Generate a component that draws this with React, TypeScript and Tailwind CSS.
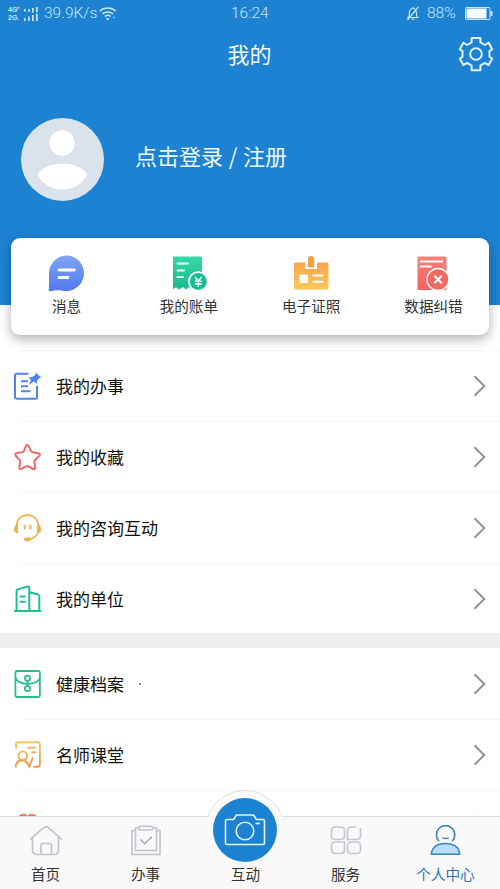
import type { ReactNode } from "react";

const StatusBar = () => (
  <div className="flex h-[27px] items-center pl-2 pr-[7px] text-[#c5e6fb]">
    <div className="flex w-[15px] flex-col whitespace-nowrap font-['Liberation_Sans'] text-[7px] font-bold leading-[8px]">
      <span>4G⁺</span>
      <span>2G.</span>
    </div>
    <svg width="15" height="14" viewBox="0 0 15 14" fill="currentColor">
      <path d="M1 2h1.6v2.5H1zM5.2 2h1.6v3H5.2zM9 1h1.7v4.5H9zM13 0h1.7v5.5H13zM1 11h1.6v3H1zM5.2 9.5h1.6V14H5.2zM9 8h1.7v6H9zM13 7h1.7v7H13z" />
    </svg>
    <span className="ml-[6px] w-[55px] whitespace-nowrap font-['Roboto'] text-[15.5px] font-light">39.9K/s</span>
    <svg width="18" height="15" viewBox="0 0 18 15" fill="none" stroke="currentColor" strokeWidth="1.4">
      <path d="M.7 5.2a11.8 11.8 0 0 1 16 0M3.3 8a8.2 8.2 0 0 1 10.8 0M5.8 10.6a4.4 4.4 0 0 1 5.8 0" />
      <circle cx="8.7" cy="13" r="1.2" fill="currentColor" stroke="none" />
      <circle cx="15" cy="11.5" r="1" fill="currentColor" stroke="none" opacity=".6" />
    </svg>
    <span className="ml-[114px] font-['Roboto'] text-[15.5px] font-light">16:24</span>
    <svg width="14" height="15" viewBox="0 0 14 15" className="ml-auto" fill="none" stroke="currentColor" strokeWidth="1.2">
      <path d="M1 11.5h11.7M2.6 11.3c.8-1.4.7-3 .8-4.6.1-2.6 1.5-4.2 3.5-4.2s3.4 1.6 3.5 4.2c.1 1.6 0 3.2.9 4.6M6.9 2.5V1M5.7 13.2h2.5M12.3.8 1.5 14" />
    </svg>
    <span className="ml-[7px] w-[31px] font-['Roboto'] text-[15.5px] font-light">88%</span>
    <svg width="28" height="13" viewBox="0 0 28 13" className="ml-[7px]">
      <rect x=".5" y=".5" width="24.5" height="12" rx="1" fill="none" stroke="#c5e6fb" />
      <rect x="1.5" y="1.5" width="20" height="10" fill="#f0fbff" />
      <path d="M25.5 4h2v5h-2z" fill="#c5e6fb" />
    </svg>
  </div>
);

const GearIcon = () => (
  <svg width="36" height="36" viewBox="0 0 36 36" fill="none" stroke="#e0f6ff" strokeWidth="2" strokeLinejoin="round">
    <path d="M13.6 1.9h8.8v4.5l4.4 2.6 3.9-2.3 3.5 6.7-2.7 1.8v5.6l2.7 1.8-3.5 6.4-3.9-2.1-4.4 2.6v4.7h-8.8v-4.7L9.2 26.9 5.3 29l-3.5-6.4 2.7-1.8v-5.6l-2.7-1.8 3.5-6.7L9.2 9l4.4-2.6z" />
    <circle cx="18" cy="18" r="5.8" />
  </svg>
);

const Avatar = () => (
  <svg width="84" height="84" viewBox="0 0 84 84">
    <circle cx="42.5" cy="41.5" r="41.5" fill="#dae2ec" />
    <circle cx="42.2" cy="25" r="12.7" fill="#fff" />
    <path d="M17.5 56.5C22.5 49 32.5 45.5 42.3 45.5S62.5 49 67.5 56.5C62 67 52.5 71.5 42.5 71.5s-20-4.5-25-15z" fill="#fff" />
  </svg>
);

const MessageIcon = () => (
  <svg width="38" height="38" viewBox="0 0 38 38">
    <defs>
      <linearGradient id="message" x2="0" y2="1">
        <stop stopColor="#7fa5f8" />
        <stop offset="1" stopColor="#5379ee" />
      </linearGradient>
    </defs>
    <path d="M19 1.5a17.8 17.8 0 1 1-4.5 35.2C10 35.8 5.5 37 1.8 37.2c-.9 0-1.2-.5-1.1-1.3.5-5 .3-11 .3-16.4a18 18 0 0 1 18-18z" fill="url(#message)" />
    <path d="M11 16h15.5M11 23.5h9" stroke="#fff" strokeWidth="2.8" strokeLinecap="round" />
  </svg>
);

const BillIcon = () => (
  <svg width="38" height="38" viewBox="0 0 38 38">
    <defs>
      <linearGradient id="bill" x2="0" y2="1">
        <stop stopColor="#35d9a4" />
        <stop offset="1" stopColor="#18b98f" />
      </linearGradient>
    </defs>
    <path d="M3.5 2.5H31q1 0 1 1v30l-2.5 2-3.5-2.3-3.5 2.3L19 33l-3 2.5-3.3-2.5-3.5 2.5-3.2-2.3L3 35V3.5q0-1 .5-1z" fill="url(#bill)" />
    <path d="M7.5 9.5H18M7.5 16.5H14M7.5 23.2H13" stroke="#fff" strokeWidth="1.8" strokeLinecap="round" />
    <circle cx="28.3" cy="27.5" r="10.3" fill="#fff" />
    <circle cx="28.3" cy="27.5" r="8.5" fill="#1abc93" />
    <path d="m25 23 3.3 4 3.3-4M24.8 27.3h7M24.8 30h7M28.3 27v5.5" fill="none" stroke="#fff" strokeWidth="1.4" />
  </svg>
);

const LicenceIcon = () => (
  <svg width="38" height="38" viewBox="0 0 38 38">
    <defs>
      <linearGradient id="licence" x2="0" y2="1">
        <stop stopColor="#f6a54f" />
        <stop offset="1" stopColor="#fac95b" />
      </linearGradient>
    </defs>
    <path d="M3 8.5h10V15h12V8.5h10q1.5 0 1.5 1.5v24q0 1.5-1.5 1.5H3.5Q2 35.5 2 34V10q0-1.500 1-1.500z" fill="url(#licence)" />
    <path d="M16 5.200a3.100 3.100 0 0 1 6.200 0v8.300H16z" fill="#f5a04d" />
    <path d="M7.500 20.500h8.500V29H7.500z" fill="#fff" />
    <path d="M20.500 21.500h11M20.500 27.800h11" stroke="#fff" strokeWidth="2" />
  </svg>
);

const ErrorDataIcon = () => (
  <svg width="38" height="38" viewBox="0 0 38 38">
    <defs>
      <linearGradient id="errorData" x2="0" y2="1">
        <stop stopColor="#fc8178" />
        <stop offset="1" stopColor="#f16160" />
      </linearGradient>
    </defs>
    <rect x="3.5" y="2.5" width="29" height="33.5" rx="1.2" fill="url(#errorData)" />
    <path d="M6 7.5h23M6 12.5h11.5" stroke="#fff" strokeWidth="2" />
    <circle cx="24" cy="25.5" r="11" fill="#f36863" stroke="#fff" strokeWidth="1.3" />
    <path d="m20.2 21.7 7.6 7.6m0-7.6-7.6 7.6" stroke="#fff" strokeWidth="2" />
  </svg>
);

const TaskIcon = () => (
  <svg width="30" height="30" viewBox="0 0 30 30" fill="none" stroke="#5183eb" strokeWidth="2">
    <path d="M15.5 2.7H4q-2 0-2 2V26q0 1.8 2 1.8h18.5q1.5 0 1.5-1.5V15" />
    <path d="M8 10.3h7M8 15.2h7M8 20.2h9.5" />
    <path d="m22.5 1.5 5.8 5-2.3.8-2 2.4-.2 3.3-3-2.4-5 3.5 2.3-5.2-2.5-2.4 3.5-.6 3.3-2z" fill="#5183eb" stroke="none" />
  </svg>
);

const StarIcon = () => (
  <svg width="30" height="30" viewBox="0 0 30 30" fill="none" stroke="#ef6b66" strokeWidth="2" strokeLinejoin="round">
    <path d="M12.9 4q1.5-2.1 2.8.1l2.5 5.1q.5.9 1.5 1l5.7 1q2.5.7.9 2.7l-4.5 4.3q-.6.8-.4 1.7l.9 5.4q.1 2.4-2.1 1.7l-5-2.7q-1-.5-1.9 0l-5 2.6q-2.1.6-2-1.7l1-5.4q.2-1-.5-1.7L2.7 13.7q-1.3-2 .9-2.6l5.8-.9q1-.1 1.4-1z" />
  </svg>
);

const HeadsetIcon = () => (
  <svg width="30" height="30" viewBox="0 0 30 30" fill="none" stroke="#efb252" strokeWidth="1.8">
    <path d="M3.5 14C3.5 6.5 8 2.2 14.5 2.2S25.5 6.5 25.5 14M25.3 19c-1.3 4-4 6.2-8.5 7" />
    <path d="M5 12v8.5C2 20.5 1 18.5 1 16.3S2 12 5 12zM24 12v8.5c2.9 0 4.3-2 4.3-4.2S26.900 12 24 12z" fill="#efb252" stroke="none" />
    <path d="M11.7 11.8v4.4M17.3 11.8v4.4" strokeWidth="2" />
    <ellipse cx="14.5" cy="26.2" rx="3.5" ry="2" fill="#efb252" stroke="none" />
  </svg>
);

const BuildingIcon = () => (
  <svg width="30" height="30" viewBox="0 0 30 30" fill="none" stroke="#24bd92" strokeWidth="2" strokeLinejoin="round">
    <path d="M1 26.9h27M3.6 26.5V6.8q0-1 1-1.4L14.5 2.5q1.8-.4 1.8 1.4v22.6M16.3 8.3l8.2 2q1.8.5 1.8 2.2v14" />
    <path d="M7.5 12.5h4.3M7.5 17.7h4.3" strokeLinecap="round" />
  </svg>
);

const ArchiveIcon = () => (
  <svg width="30" height="30" viewBox="0 0 30 30" fill="none" stroke="#2abd91" strokeWidth="1.8">
    <rect x="2.4" y="2" width="24.5" height="26" rx="1.5" />
    <path d="M2.5 9c2 4 6 5.3 9.5 5.6h5.5C22 14.3 25.5 12.5 26.9 9" />
    <circle cx="14.5" cy="9.2" r="2.6" />
    <circle cx="14.5" cy="19.5" r="2.6" />
    <path d="M14.5 12v5" />
  </svg>
);

const LessonIcon = () => (
  <svg width="30" height="30" viewBox="0 0 30 30" fill="none" stroke="url(#lesson)" strokeWidth="1.9">
    <defs>
      <linearGradient id="lesson" gradientUnits="userSpaceOnUse" x1="0" y1="0" x2="0" y2="28">
        <stop stopColor="#f2cc63" />
        <stop offset="1" stopColor="#ee9448" />
      </linearGradient>
    </defs>
    <path d="M3 8.5V4q0-1.7 1.7-1.7h20.5q1.7 0 1.7 1.7v20q0 2.8-2.8 2.8H20.5" />
    <path d="M14.5 7.8H23M18.5 12.3H23" />
    <circle cx="9.7" cy="15.7" r="4.3" />
    <path d="M2.5 27.5c.2-4 2.5-7 7-7.3 3.5.2 4.7 2.5 6.8 6.3l3.7-9.5" />
  </svg>
);

const HeartIcon = () => (
  <svg width="30" height="30" viewBox="0 0 30 30" fill="none" stroke="#ee6f59" strokeWidth="2">
    <path d="M14.5 26C8 20 5 15 5 10c0-6.5 6.5-8 9.5-3.5C17.5 2 24 3.5 24 10c0 5-3 10-9.5 16z" />
  </svg>
);

const Row = ({ icon, label, dot }: { icon: ReactNode; label: string; dot?: boolean }) => (
  <div className="flex h-[71px] shrink-0 items-center pl-[13px] pr-[14px]">
    {icon}
    <span className="ml-[13px] text-[17px] text-[#111]">{label}</span>
    {dot && <span className="ml-[15px] mt-px size-[2px] rounded-full bg-[#666]" />}
    <svg width="13" height="22" viewBox="0 0 13 22" className="ml-auto" fill="none" stroke="#929292" strokeWidth="2">
      <path d="m1.5 1.2 9.8 9.8-9.8 9.8" />
    </svg>
  </div>
);

const Divider = () => <div className="-mb-px ml-5 h-px shrink-0 bg-[#f5f5f5]" />;

const HomeIcon = () => (
  <svg width="34" height="32" viewBox="0 0 34 32" fill="none" stroke="#bfc0d0" strokeWidth="1.6" strokeLinejoin="round">
    <path d="M1 14.5 14.8 2.6q2.2-1.9 4.4 0L33 14.5M3.5 12.5v12.5q0 4.5 4.5 4.5h17q4.5 0 4.5-4.5v-12.5M12 29.5V20.5q0-2 2-2h6.5q2 0 2 2v9" />
  </svg>
);

const ClipboardIcon = () => (
  <svg width="34" height="32" viewBox="0 0 34 32" fill="none" stroke="#bfc0d0" strokeWidth="1.6">
    <path d="M6 5.5H3V29.5h28V5.5h-3M10 3H6.5v22.5h21V3H23.5" />
    <rect x="10" y="1.3" width="13.5" height="3.7" rx="1" />
    <path d="m11.5 14.5 4.3 4.2 7-7" stroke="#a7a9bb" />
  </svg>
);

const ServiceIcon = () => (
  <svg width="34" height="32" viewBox="0 0 34 32" fill="none" stroke="#c6c5d8" strokeWidth="1.7">
    <rect x="2.5" y="2" width="13" height="12.5" rx="3.5" />
    <path d="M27 2h-4.5Q18.5 2 18.5 6v8.5h9q4 0 4-4V3" />
    <path d="M6.5 17h9v7.5q0 4-4 4h-5q-4 0-4-4v-3.5q0-4 4-4z" />
    <rect x="18.5" y="17" width="13" height="11.5" rx="3.5" />
  </svg>
);

const PersonIcon = () => (
  <svg width="34" height="32" viewBox="0 0 34 32" fill="none" stroke="#3a82c0" strokeWidth="1.6">
    <path d="M10 16.2a9.2 9.2 0 1 1 13.2 0" />
    <path d="M13.4 12.7q3.2 1.8 6.4 0" strokeWidth="1.3" />
    <path d="M2.500 29.200v-2c1.500-6 7-8.700 14-8.700s12.500 2.700 14 8.700v2z" fill="#b9defb" />
  </svg>
);

const CameraIcon = () => (
  <svg width="42" height="32" viewBox="0 0 42 32" fill="none" stroke="#def3ff" strokeWidth="1.6" strokeLinejoin="round">
    <path d="M3 5.5h6.5L12.5 1h17l3 4.5H39q1.5 0 1.5 1.5v22q0 1.5-1.5 1.5H3q-1.5 0-1.5-1.5V7q0-1.5 1.5-1.5z" />
    <circle cx="21" cy="17" r="8.8" />
    <path d="M31.5 9.5h4.5" />
  </svg>
);

const shortcuts = [
  { label: "消息", icon: <MessageIcon /> },
  { label: "我的账单", icon: <BillIcon /> },
  { label: "电子证照", icon: <LicenceIcon /> },
  { label: "数据纠错", icon: <ErrorDataIcon /> },
];

const tabs = [
  { label: "首页", icon: <HomeIcon /> },
  { label: "办事", icon: <ClipboardIcon /> },
  { label: "互动", icon: null },
  { label: "服务", icon: <ServiceIcon /> },
  { label: "个人中心", icon: <PersonIcon />, active: true },
];

const BottomNav = () => (
  <nav className="relative h-[73px] shrink-0 border-t border-[#dedede] bg-[#f9f9f9]">
    {/* Raised camera button */}
    <div className="absolute -top-[27px] left-[205px] h-[26px] w-20 overflow-hidden">
      <div className="size-20 rounded-full border border-[#dfdfe3] bg-[#fbfbfb]" />
    </div>
    <div className="absolute -top-px left-[208px] h-px w-[74px] bg-[#f9f9f9]" />
    <div className="absolute -top-[19px] left-[213px] flex size-16 items-center justify-center rounded-full bg-[#1e82d2]">
      <CameraIcon />
    </div>
    <div className="-ml-[4.5px] grid w-[500px] grid-cols-5">
      {tabs.map((tab) => (
        <div key={tab.label} className="flex flex-col items-center pt-2">
          <div className="h-8">{tab.icon}</div>
          <span
            className={
              tab.active
                ? "mt-[7px] text-[14.6px] leading-5 text-[#2878b5]"
                : "mt-[7px] text-[14.6px] leading-5 text-[#333]"
            }
          >
            {tab.label}
          </span>
        </div>
      ))}
    </div>
  </nav>
);

const App = () => {
  return (
    <div className="flex h-[889px] w-[500px] flex-col overflow-hidden bg-white font-['Noto_Sans_CJK_SC',sans-serif]">
      <header className="h-[305px] shrink-0 bg-[#1e82d2]">
        <StatusBar />
        <div className="grid h-[54px] grid-cols-[1fr_auto_1fr] items-center pr-[6px]">
          <span />
          <h1 className="-mt-0.5 pl-[5px] text-[22px] text-[#eefaff]">我的</h1>
          <div className="flex justify-end">
            <GearIcon />
          </div>
        </div>
        <div className="mt-[37px] flex h-[84px] items-center pl-[20px]">
          <Avatar />
          <span className="-mt-2.5 ml-[31px] text-[22px] text-[#eefaff] [word-spacing:0.8px]">点击登录 / 注册</span>
        </div>
      </header>

      {/* Shortcuts card overlaps the header */}
      <div className="z-10 mx-[11px] -mt-[67px] flex h-[97px] shrink-0 justify-between rounded-[9px] bg-white px-[25px] pt-4 shadow-[0_4px_12px_rgba(0,0,0,0.32)]">
        {shortcuts.map((item) => (
          <div key={item.label} className="flex w-[61px] flex-col items-center">
            {item.icon}
            <span className="mt-1 whitespace-nowrap text-[14.6px] leading-5 text-[#333]">{item.label}</span>
          </div>
        ))}
      </div>

      <main className="flex min-h-0 flex-1 flex-col overflow-hidden pt-[15px]">
        <Divider />
        <Row icon={<TaskIcon />} label="我的办事" />
        <Divider />
        <Row icon={<StarIcon />} label="我的收藏" />
        <Divider />
        <Row icon={<HeadsetIcon />} label="我的咨询互动" />
        <Divider />
        <Row icon={<BuildingIcon />} label="我的单位" />
        <div className="-mt-px h-[15px] shrink-0 bg-[#efefef]" />
        <Row icon={<ArchiveIcon />} label="健康档案" dot />
        <Divider />
        <Row icon={<LessonIcon />} label="名师课堂" />
        <Divider />
        <Row icon={<HeartIcon />} label="" />
      </main>

      <BottomNav />
    </div>
  );
};

export default App;
